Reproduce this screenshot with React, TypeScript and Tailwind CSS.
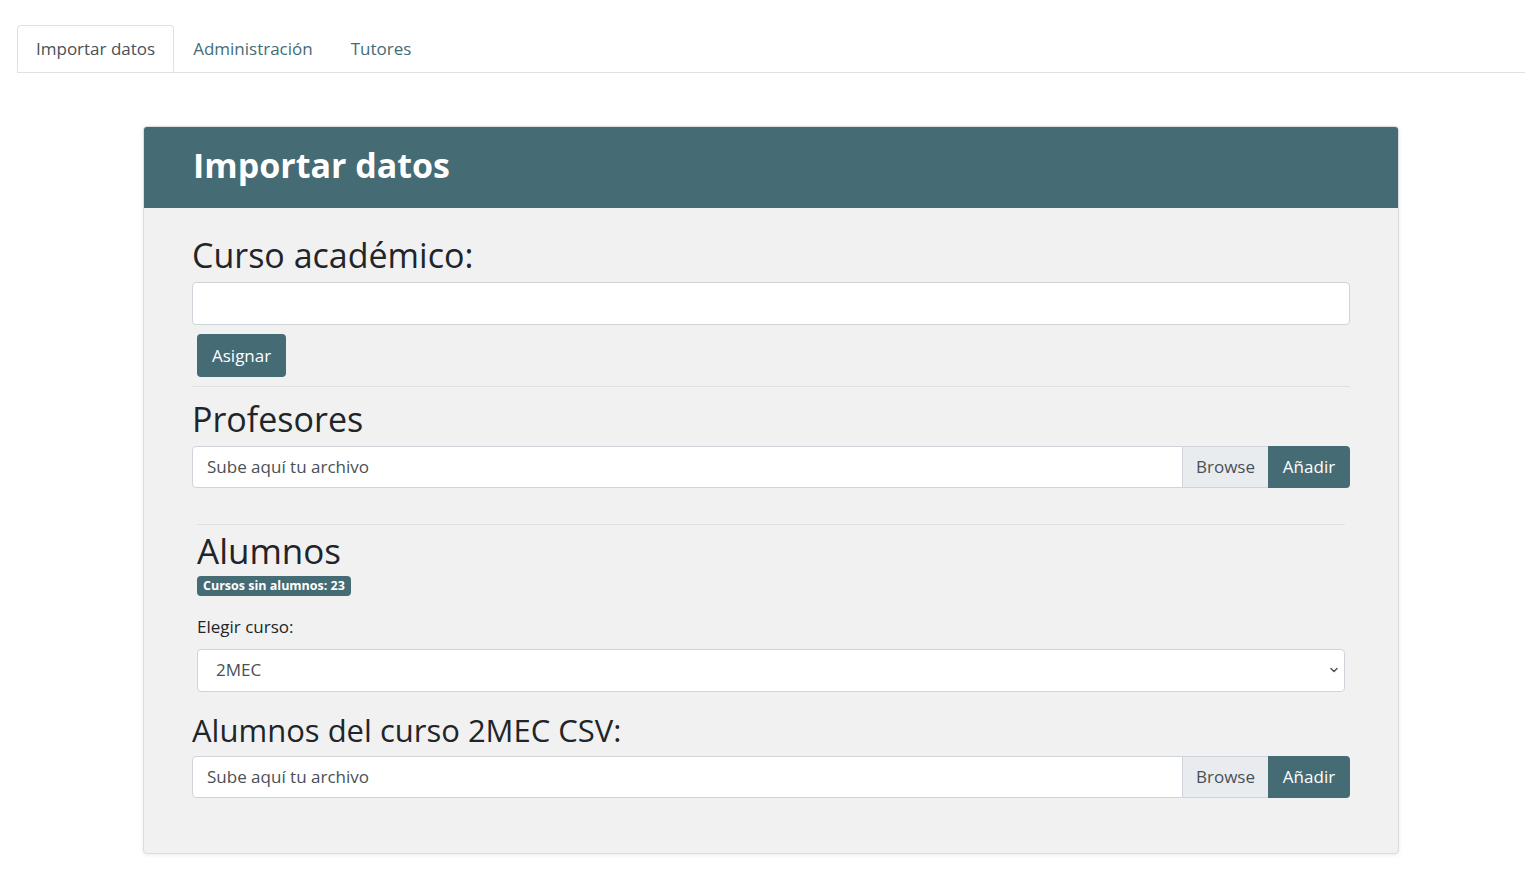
import { ChevronDown } from "lucide-react";

const TEAL = "bg-[#456b75]";

function FileRow() {
  return (
    <div className="flex h-[42px] w-full">
      <div className="flex flex-1 items-center rounded-l border border-[#ced4da] bg-white px-[14px] text-[17px] text-[#495057]">
        Sube aquí tu archivo
      </div>
      <div className="flex w-[85px] items-center justify-center border-y border-[#ced4da] bg-[#e9ecef] text-[17px] text-[#495057]">
        Browse
      </div>
      <button className={`flex w-[82px] items-center justify-center rounded-r ${TEAL} text-[17px] text-white`}>
        Añadir
      </button>
    </div>
  );
}

export default function App() {
  return (
    <div className="min-h-screen bg-white font-['Open_Sans',sans-serif] text-[#212529]">
      {/* tabs */}
      <div className="pl-[17px] pr-[11px] pt-[25px]">
        <nav className="flex border-b border-[#dee2e6] text-[17px]">
          <span className="-mb-px flex h-[47px] items-center rounded-t border border-[#dee2e6] border-b-white bg-white px-[18px] text-[#495057]">
            Importar datos
          </span>
          <span className="flex h-[47px] items-center px-[19px] text-[#456b75]">Administración</span>
          <span className="flex h-[47px] items-center px-[19px] text-[#456b75]">Tutores</span>
        </nav>
      </div>

      <div className="pl-[143px] pr-[137px] pt-[53px] pb-10">
        <section className="overflow-hidden rounded border border-[#dcdcdc] bg-[#f1f1f1] shadow-[0_1px_4px_rgba(0,0,0,0.08)]">
          <header className={`flex h-[81px] items-center ${TEAL} px-[49px] pb-[4px]`}>
            <h1 className="text-[34px] font-bold text-white">Importar datos</h1>
          </header>

          <div className="px-[48px] pt-[27px] pb-[55px]">
            <h2 className="text-[34px] leading-[1.2]">Curso académico:</h2>
            <input className="mt-[6px] block h-[43px] w-full rounded border border-[#ced4da] bg-white" />
            <button className={`ml-[5px] mt-[9px] h-[43px] rounded px-[15px] text-[17px] text-white ${TEAL}`}>
              Asignar
            </button>
            <hr className="mt-[9px] border-t border-[#dfe0e6]" />

            <h2 className="mt-[12px] text-[34px] leading-[1.2]">Profesores</h2>
            <div className="mt-[6px]">
              <FileRow />
            </div>

            <div className="px-[5px]">
              <hr className="mt-[36px] border-t border-[#dfe0e6]" />
              <h2 className="mt-[5px] text-[35px] leading-[1.2]">Alumnos</h2>
              <span className={`inline-block rounded ${TEAL} px-[6px] py-[1px] text-[12.5px] font-bold leading-[18px] text-white`}>
                Cursos sin alumnos: 23
              </span>
              <label className="mt-[19px] block text-[17px] leading-[24px]">Elegir curso:</label>
              <div className="mt-[10px] flex h-[43px] w-full items-center justify-between rounded border border-[#ced4da] bg-white pl-[18px] pr-[4px] text-[17px] text-[#495057]">
                <span>2MEC</span>
                <ChevronDown className="size-[12px] text-[#555]" strokeWidth={3} />
              </div>
            </div>

            <h2 className="mt-[20px] text-[31px] leading-[1.2]">Alumnos del curso 2MEC CSV:</h2>
            <div className="mt-[7px]">
              <FileRow />
            </div>
          </div>
        </section>
      </div>
    </div>
  );
}
